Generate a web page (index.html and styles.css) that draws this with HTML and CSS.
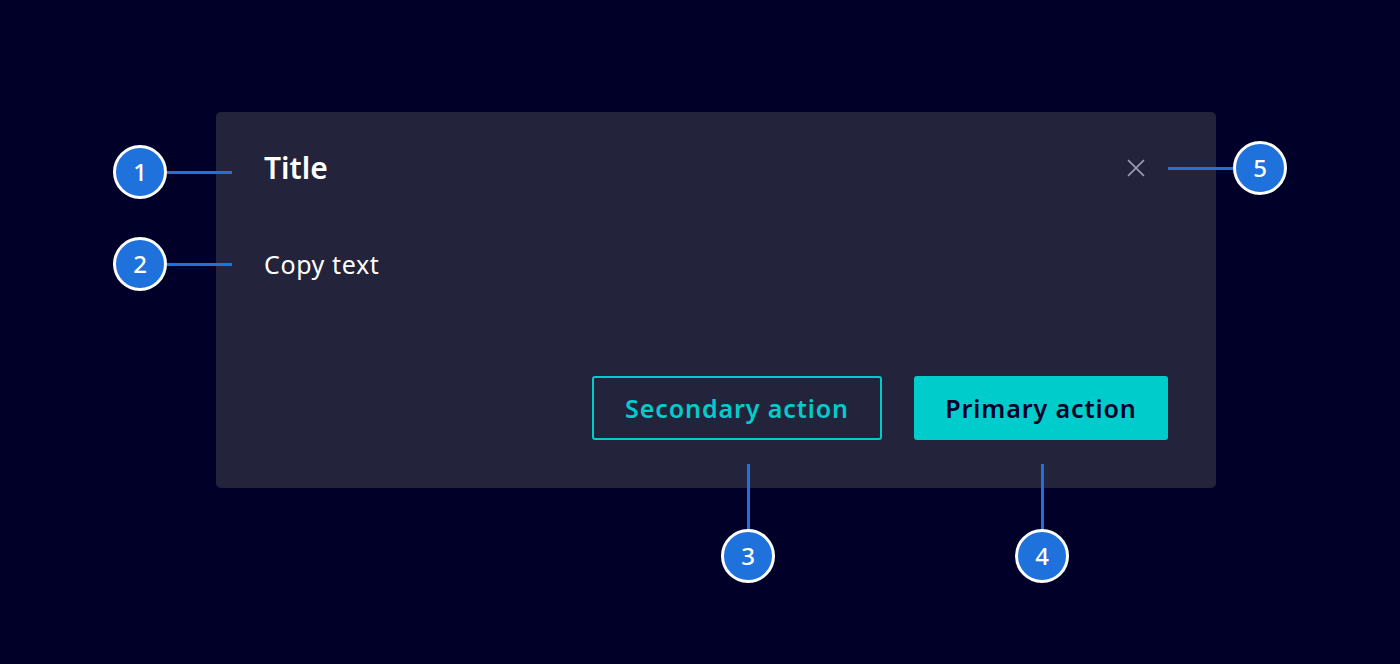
FILE: index.html
```html
<!DOCTYPE html>
<html lang="en">
<head>
<meta charset="utf-8">
<title>Dialog anatomy</title>
<link rel="stylesheet" href="styles.css">
</head>
<body>
<div class="stage">
  <div class="dialog">
    <div class="header">
      <h1 class="title">Title</h1>
      <button class="close" aria-label="Close">
        <svg width="24" height="24" viewBox="0 0 24 24"><path d="M2.5 2.5 L21.5 21.5 M21.5 2.5 L2.5 21.5" stroke="#9c9cb0" stroke-width="2" fill="none"/></svg>
      </button>
    </div>
    <p class="copy">Copy text</p>
    <div class="actions">
      <button class="btn secondary">Secondary action</button>
      <button class="btn primary">Primary action</button>
    </div>

    <div class="marker m1"><span class="line h"></span><span class="badge">1</span></div>
    <div class="marker m2"><span class="line h"></span><span class="badge">2</span></div>
    <div class="marker m5"><span class="line h"></span><span class="badge">5</span></div>
    <div class="marker m3"><span class="line v"></span><span class="badge">3</span></div>
    <div class="marker m4"><span class="line v"></span><span class="badge">4</span></div>
  </div>
</div>
</body>
</html>
```

FILE: styles.css
```css
* { box-sizing: border-box; }
html, body {
  margin: 0;
  padding: 0;
  background: #000028;
  width: 1400px;
  height: 664px;
  overflow: hidden;
  font-family: "Noto Sans", "Open Sans", sans-serif;
}
.stage {
  padding: 112px 0 0 216px;
}
.dialog {
  position: relative;
  width: 1000px;
  height: 376px;
  background: #23233c;
  border-radius: 5px;
  padding: 36px 48px 48px 48px;
  display: flex;
  flex-direction: column;
}
.header {
  display: flex;
  align-items: center;
  justify-content: space-between;
  height: 40px;
}
.title {
  margin: 0;
  font-size: 30px;
  font-weight: 600;
  color: #ffffff;
  line-height: 40px;
}
.close {
  background: none;
  border: none;
  padding: 0;
  margin-right: 20px;
  width: 24px;
  height: 24px;
  display: flex;
  cursor: pointer;
}
.close svg { width: 20px; height: 20px; margin: 2px; }
.copy {
  margin: 60px 0 0 0;
  font-size: 25px;
  letter-spacing: 0.6px;
  line-height: 32px;
  color: #ffffff;
}
.actions {
  margin-top: auto;
  display: flex;
  justify-content: flex-end;
  gap: 32px;
}
.btn {
  height: 64px;
  border-radius: 3px;
  font-family: inherit;
  font-size: 25px;
  font-weight: 600;
  letter-spacing: 0.9px;
  padding: 0 24px;
  cursor: pointer;
}
.secondary {
  width: 290px;
  background: transparent;
  color: #00cccc;
  border: 2px solid #00cccc;
}
.primary {
  width: 254px;
  background: #00cccc;
  color: #000028;
  border: none;
}

/* annotation markers */
.marker {
  position: absolute;
  display: flex;
  align-items: center;
}
.badge {
  width: 54px;
  height: 54px;
  border-radius: 50%;
  background: #1f71dc;
  border: 3px solid #ffffff;
  color: #ffffff;
  font-size: 24px;
  font-weight: 500;
  display: flex;
  align-items: center;
  justify-content: center;
  line-height: 1;
  flex: none;
}
.line { background: #1f71dc; flex: none; }
.line.h { width: 65px; height: 3px; }
.line.v { width: 3px; height: 65px; }

.m1, .m2 { flex-direction: row-reverse; right: calc(100% - 16px); }
.m1 { top: 33px; }
.m2 { top: 125px; }
.m5 { left: 952px; top: 29px; }
.m3, .m4 { flex-direction: column; top: 352px; }
.m3 { left: 505px; }
.m4 { left: 799px; }
```
